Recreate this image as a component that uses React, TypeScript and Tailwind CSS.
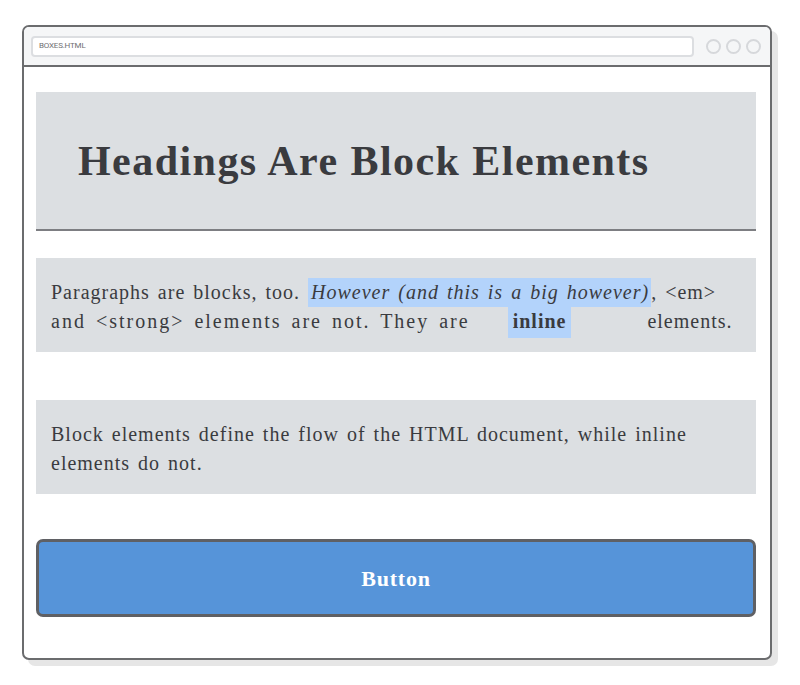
import React from "react";

export default function App() {
  const serif = { fontFamily: '"Liberation Serif", "Times New Roman", serif' };
  return (
    <div className="w-[800px] h-[685px] bg-white pt-[25px] pl-[22px]" style={serif}>
      <div className="w-[750px] h-[635px] border-2 border-[#6b6c6e] rounded-[7px] bg-white shadow-[6px_6px_0_#e6e6e6] flex flex-col overflow-hidden">
        <div className="h-[40px] bg-[#f5f6f7] border-b-2 border-[#6b6c6e] flex items-center pl-[7px] pr-[9px] gap-[12px] shrink-0">
          <div className="flex-1 h-[21px] bg-white border-2 border-[#dcdee1] rounded-[4px] flex items-center pl-[6px]">
            <span className="text-[8px] text-[#6f7073] tracking-[-0.2px]" style={{ fontFamily: '"Roboto", "Liberation Sans", sans-serif' }}>
              BOXES.HTML
            </span>
          </div>
          <div className="flex gap-[5px]">
            <div className="w-[15px] h-[15px] rounded-full border-2 border-[#d6d8db]" />
            <div className="w-[15px] h-[15px] rounded-full border-2 border-[#d6d8db]" />
            <div className="w-[15px] h-[15px] rounded-full border-2 border-[#d6d8db]" />
          </div>
        </div>
        <div className="pl-[12px] pr-[14px] pt-[25px] flex flex-col">
          <div className="h-[139px] bg-[#dcdfe2] border-b-2 border-[#7d7e82] flex items-center pl-[42px]">
            <h1 className="text-[42px] leading-[48px] font-bold text-[#3a3b3f] tracking-[1.45px]">Headings Are Block Elements</h1>
          </div>
          <div className="mt-[27px] bg-[#dcdfe2] px-[15px] pt-[20px] pb-[16px] text-[20px] leading-[29px] text-[#3a3b3f] tracking-[1px] [word-spacing:2px]">
            Paragraphs are blocks, too.{" "}
            <em className="bg-[#b3d3fb] pt-[3px] pb-[4px] pl-[3px] pr-[2px]">However (and this is a big however)</em>, &lt;em&gt;{" "}
            <span className="tracking-[2px] [word-spacing:3px]">and &lt;strong&gt; elements are not. They are</span>{" "}
            <strong className="bg-[#b3d3fb] px-[5px] pt-[3px] pb-[6px] ml-[30px] mr-[68px]">inline</strong> elements.
          </div>
          <div className="mt-[48px] bg-[#dcdfe2] px-[15px] pt-[20px] pb-[16px] text-[20px] leading-[29px] text-[#3a3b3f] tracking-[1px] [word-spacing:2px]">
            Block elements define the flow of the HTML document, while inline elements do not.
          </div>
          <button className="mt-[45px] h-[78px] bg-[#5694d9] border-[3px] border-[#5f6064] rounded-[7px] text-white text-[22px] font-bold tracking-[0.8px]" style={serif}>
            Button
          </button>
        </div>
      </div>
    </div>
  );
}
